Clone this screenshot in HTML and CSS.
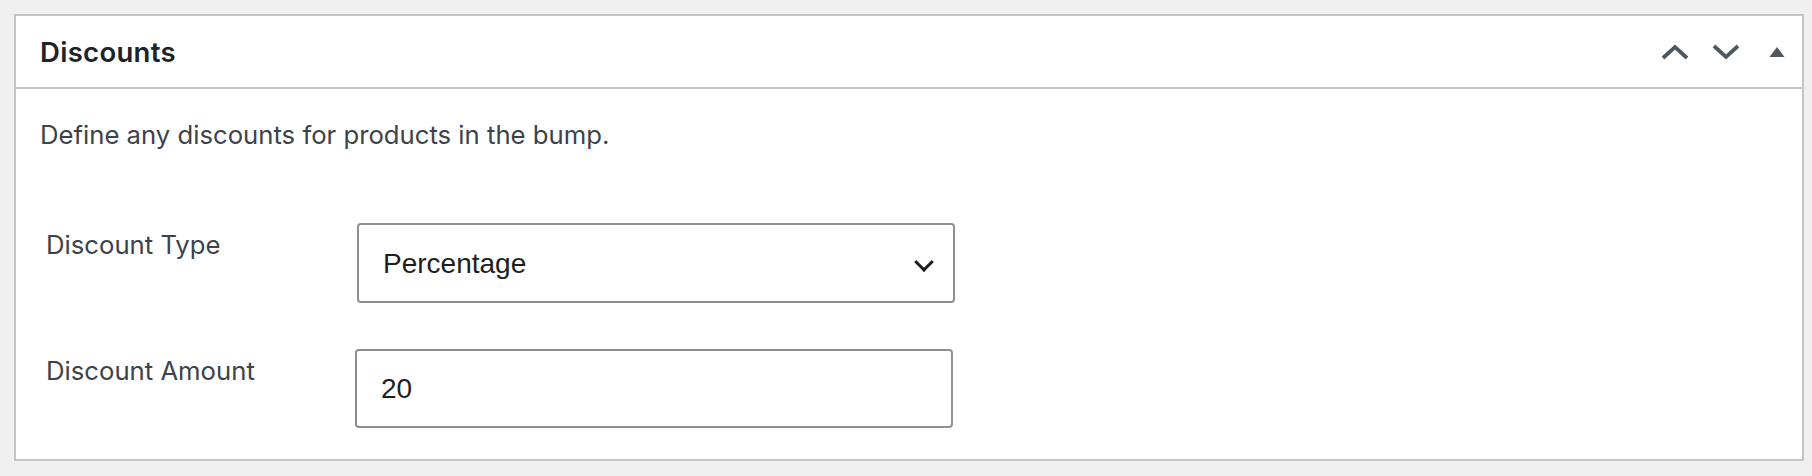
FILE: index.html
```html
<!DOCTYPE html>
<html>
<head>
    <meta charset="UTF-8">
    <link rel="stylesheet" href="styles.css">
</head>
<body>
<div class="postbox">
    <div class="postbox-header">
        <h2 class="hndle">Discounts</h2>
        <div class="handle-actions">
            <button class="handle-btn" type="button" aria-label="Move up">
                <svg width="28" height="16" viewBox="0 0 28 16"><path d="M2 14 L14 3 L26 14" fill="none" stroke="currentColor" stroke-width="3.8" stroke-linejoin="miter"/></svg>
            </button>
            <button class="handle-btn" type="button" aria-label="Move down">
                <svg width="28" height="16" viewBox="0 0 28 16"><path d="M2 2 L14 13 L26 2" fill="none" stroke="currentColor" stroke-width="3.8" stroke-linejoin="miter"/></svg>
            </button>
            <button class="handle-btn" type="button" aria-label="Toggle panel">
                <svg width="16" height="12" viewBox="0 0 16 12"><path d="M8 1 L15.5 11 L0.5 11 Z" fill="currentColor"/></svg>
            </button>
        </div>
    </div>

    <div class="inside">
        <p class="description">Define any discounts for products in the bump.</p>

        <div class="form-rows">
            <div class="form-row">
                <label for="discountType">Discount Type</label>
                <div class="select-wrap">
                    <select id="discountType">
                        <option value="percentage">Percentage</option>
                        <option value="fixed">Fixed Amount</option>
                    </select>
                </div>
            </div>

            <div class="form-row">
                <label for="discountAmount">Discount Amount</label>
                <input type="text" id="discountAmount" class="amount-input" value="20">
            </div>
        </div>
    </div>
</div>
</body>
</html>
```

FILE: styles.css
```css
:root {
    --border-color: #c3c4c7;
    --field-border: #8c8f94;
    --text-color: #3c434a;
    --heading-color: #1d2327;
    --icon-color: #50575e;
}

* {
    margin: 0;
    padding: 0;
    box-sizing: border-box;
}

body {
    background: #f0f0f1;
    font-family: 'Inter', 'Liberation Sans', sans-serif;
    color: var(--text-color);
    padding: 14px 8px 0 14px;
}

.postbox {
    background: #fff;
    border: 2px solid var(--border-color);
    box-shadow: 0 1px 1px rgba(0, 0, 0, 0.04);
}

.postbox-header {
    height: 73px;
    display: flex;
    align-items: center;
    justify-content: space-between;
    border-bottom: 2px solid var(--border-color);
    padding-left: 24px;
}

.hndle {
    font-size: 27.5px;
    font-weight: 600;
    letter-spacing: 0.3px;
    color: var(--heading-color);
}

.handle-actions {
    display: flex;
    align-items: center;
    height: 100%;
}

.handle-btn {
    width: 51px;
    height: 100%;
    display: flex;
    align-items: center;
    justify-content: center;
    background: none;
    border: none;
    color: var(--icon-color);
    cursor: pointer;
}

.inside {
    padding: 28px 24px 31px 24px;
}

.description {
    font-size: 25.7px;
    line-height: 35px;
    margin-bottom: 71px;
}

.form-rows {
    display: flex;
    flex-direction: column;
    gap: 46px;
}

.form-row {
    display: grid;
    grid-template-columns: 315px 598px;
    align-items: start;
}

.form-row label {
    font-size: 25.7px;
    line-height: 35px;
    padding: 4px 0 0 6px;
}

/* Select with its own chevron */
.select-wrap {
    position: relative;
    width: 598px;
    margin-left: 2px;
}

.select-wrap::after {
    content: '';
    position: absolute;
    right: 24px;
    top: 32px;
    width: 11px;
    height: 11px;
    border-right: 3px solid #1e1e1e;
    border-bottom: 3px solid #1e1e1e;
    transform: rotate(45deg);
    pointer-events: none;
}

select,
.amount-input {
    display: block;
    width: 598px;
    border: 2px solid var(--field-border);
    border-radius: 4px;
    background: #fff;
    font-family: 'Liberation Sans', Arial, sans-serif;
    font-size: 28px;
    color: #1e1e1e;
    padding: 0 24px;
    outline: none;
}

select {
    appearance: none;
    -webkit-appearance: none;
    height: 80px;
}

.amount-input {
    height: 79px;
}
```
